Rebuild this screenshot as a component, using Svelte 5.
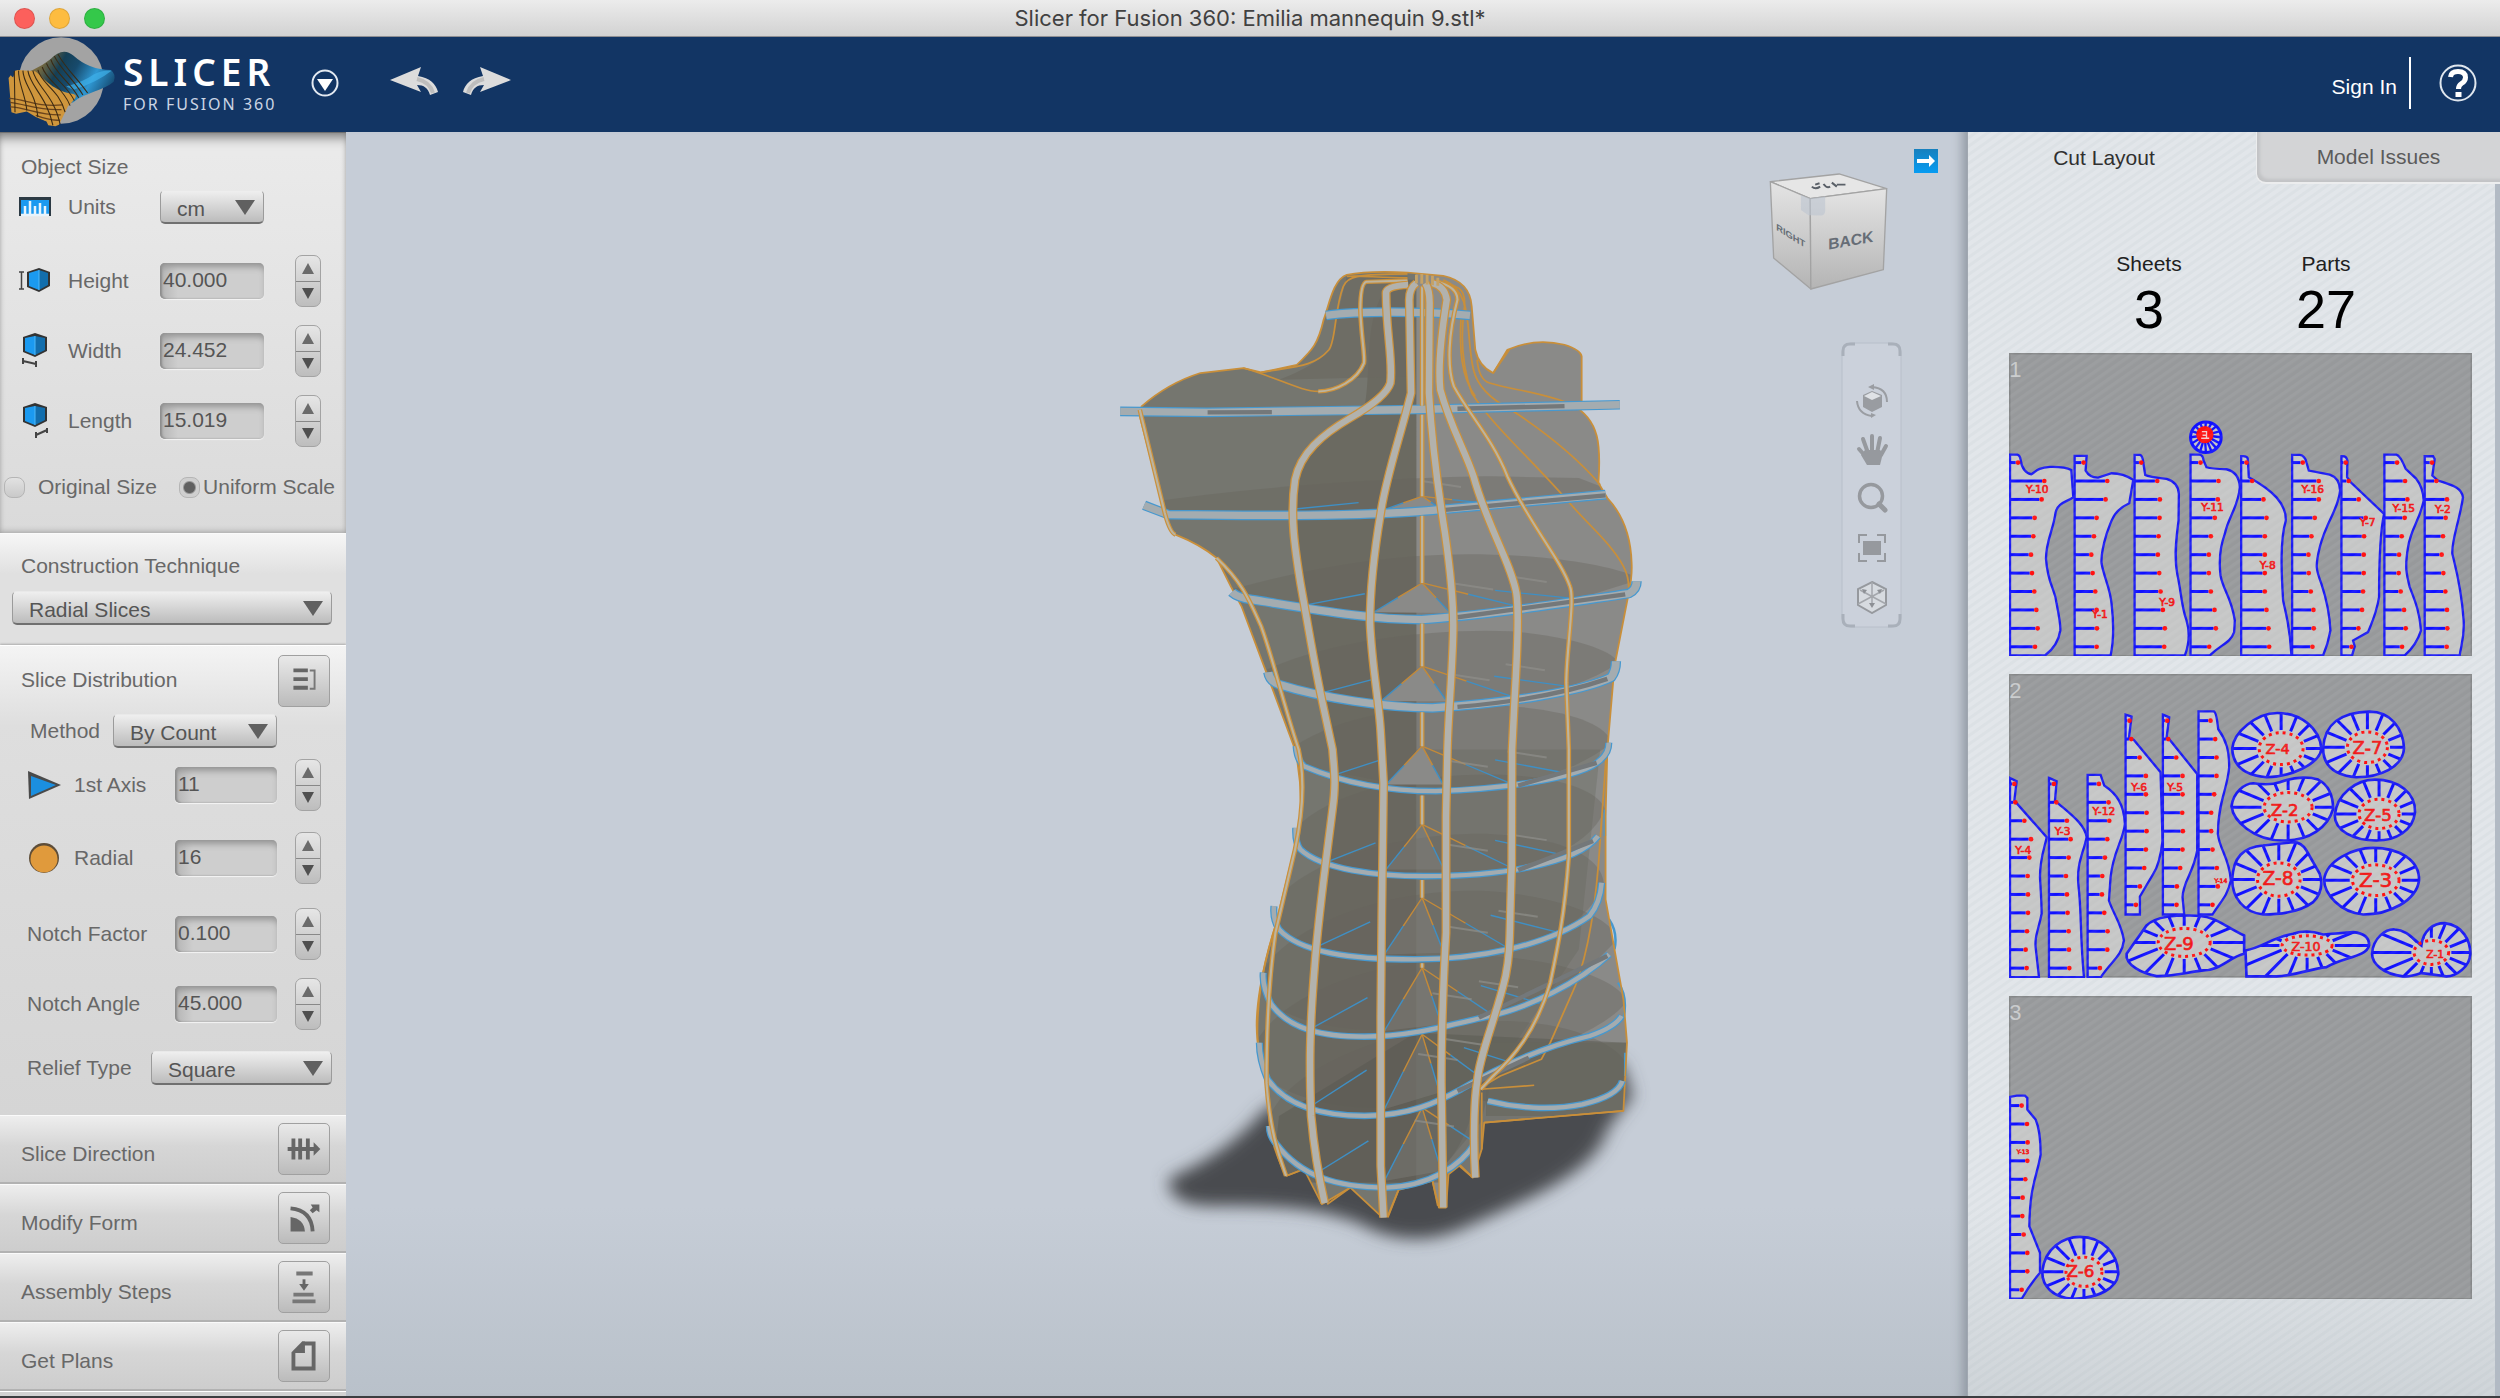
<script lang="ts">
  type Field = { id: string; label: string; value: string; step: number; digits: number; icon?: string };
  type Rib = { x: number; ends: number[]; d: string; label: string; lx: number; ly: number; size?: number };
  type Disc = { cx: number; cy: number; rx: number; ry: number; d: string; label: string; lx: number; ly: number; size: number };
  type Sheet = { top: number; ribs: Rib[]; discs: Disc[] };

  let units = $state('cm');
  let technique = $state('Radial Slices');
  let method = $state('By Count');
  let relief = $state('Square');
  let scale = $state('uniform');
  let tab = $state('layout');

  let sizes: Field[] = $state([
    { id: 'height', label: 'Height', value: '40.000', step: 1, digits: 3 },
    { id: 'width', label: 'Width', value: '24.452', step: 1, digits: 3 },
    { id: 'length', label: 'Length', value: '15.019', step: 1, digits: 3 }
  ]);

  let slices: Field[] = $state([
    { id: 'axis', label: '1st Axis', value: '11', step: 1, digits: 0, icon: 'axis' },
    { id: 'radial', label: 'Radial', value: '16', step: 1, digits: 0, icon: 'radial' },
    { id: 'factor', label: 'Notch Factor', value: '0.100', step: 0.1, digits: 3 },
    { id: 'angle', label: 'Notch Angle', value: '45.000', step: 1, digits: 3 }
  ]);

  const closed = ['Slice Direction', 'Modify Form', 'Assembly Steps', 'Get Plans'];
  const tools = ['Orbit', 'Pan', 'Zoom', 'Fit', 'Home'];

  function bump(f: Field, dir: number) {
    f.value = (parseFloat(f.value) + dir * f.step).toFixed(f.digits);
  }

  // front edges of the horizontal slices
  const bands = [
    'M632,197 C720,184 900,184 1035,197',
    'M55,485 L300,488 L850,480 L1455,465',
    'M122,767 L190,795 C500,800 800,797 950,780 L1415,735',
    'M368,1028 Q385,1045 425,1050 C600,1080 750,1110 900,1110 C1100,1095 1300,1060 1480,1032 Q1502,1020 1502,995',
    'M470,1268 Q474,1295 500,1305 C620,1345 800,1375 930,1375 C1150,1360 1350,1325 1430,1284 Q1444,1265 1444,1235',
    'M548,1490 Q550,1530 570,1550 C680,1600 800,1625 940,1625 C1100,1620 1350,1590 1402,1530 Q1424,1510 1424,1480',
    'M547,1735 Q545,1780 560,1800 C620,1860 770,1880 910,1880 C1100,1880 1330,1850 1394,1760',
    'M486,1970 Q482,2010 500,2040 C560,2110 700,2130 880,2130 C1060,2130 1250,2090 1370,2000 Q1400,1960 1404,1900',
    'M456,2170 Q452,2210 478,2265 C530,2340 620,2362 740,2362 C860,2362 950,2335 1090,2300 C1200,2275 1340,2200 1425,2115',
    'M445,2380 Q445,2430 468,2490 C520,2570 620,2600 740,2600 C870,2598 940,2560 1010,2520 C1120,2450 1250,2390 1370,2360 Q1440,2335 1460,2300',
    'M473,2630 Q473,2660 493,2685 C560,2780 660,2815 800,2815 C920,2812 1010,2750 1050,2680',
    'M1085,2555 C1160,2575 1260,2585 1350,2565 Q1450,2540 1462,2495'
  ];

  const faces = [
    'M122,760 C500,700 900,682 1100,680 L1340,685 L1420,718 L950,785 L190,795Z',
    'M365,1020 C600,950 850,905 1100,915 C1300,920 1480,960 1510,990 L1300,1060 L900,1110 L425,1050Z',
    'M465,1260 C650,1170 950,1135 1150,1145 C1350,1165 1440,1210 1450,1240 C1300,1350 1050,1375 930,1375 L500,1305Z',
    'M543,1490 C700,1380 950,1355 1150,1370 C1330,1385 1420,1430 1432,1480 C1300,1600 1050,1625 940,1625 L570,1550Z',
    'M543,1740 C640,1630 850,1575 1100,1575 C1300,1580 1400,1630 1413,1680 C1350,1850 1050,1880 910,1880 C770,1880 620,1860 555,1800Z',
    'M485,1960 C560,1850 800,1750 1080,1753 C1300,1765 1400,1820 1410,1900 C1350,2090 1060,2130 880,2130 C700,2130 560,2110 495,2040Z',
    'M455,2160 C560,2000 850,1915 1080,1925 C1300,1940 1440,2010 1447,2070 C1340,2200 1200,2275 1090,2300 C860,2362 620,2362 475,2265Z',
    'M440,2370 C540,2200 850,2120 1080,2120 C1300,2130 1470,2200 1472,2260 C1400,2360 1120,2450 1010,2520 C870,2598 620,2600 465,2490Z',
    'M470,2620 C500,2470 800,2330 1100,2315 C1330,2310 1470,2400 1472,2450 L1462,2495 C1400,2600 1160,2575 1050,2550 C1010,2750 920,2812 800,2815 C660,2815 560,2780 490,2685Z'
  ];

  // spokes of each slice: hub height, then the points where the ribs meet the edge
  const spokes = [
    { y: 740, to: [[545, 778], [795, 780], [950, 775], [1070, 760]] },
    { y: 1000, to: [[580, 1065], [765, 1088], [980, 1090], [1160, 1068], [1310, 1045]] },
    { y: 1250, to: [[620, 1330], [785, 1355], [970, 1355], [1150, 1340], [1305, 1310]] },
    { y: 1490, to: [[660, 1575], [800, 1605], [960, 1605], [1145, 1600], [1310, 1572]] },
    { y: 1725, to: [[640, 1835], [800, 1860], [962, 1860], [1145, 1852], [1310, 1820]] },
    { y: 1945, to: [[610, 2090], [795, 2115], [962, 2110], [1145, 2098], [1285, 2050]] },
    { y: 2155, to: [[595, 2335], [795, 2345], [955, 2325], [1100, 2298], [1230, 2262]] },
    { y: 2355, to: [[590, 2570], [795, 2580], [950, 2530], [1060, 2480], [1135, 2435]] },
    { y: 2575, to: [[600, 2775], [795, 2795], [955, 2765], [1050, 2680]] }
  ];

  const ribs = [
    'M862,105 Q800,108 800,130 C800,250 820,330 812,400 C800,440 740,480 700,505 C620,555 560,610 545,690 C530,800 545,900 560,1000 C580,1120 600,1250 620,1350 L650,1500 C655,1570 660,1600 650,1680 C630,1850 610,2000 600,2150 C585,2350 585,2450 590,2600 C600,2720 615,2800 628,2862',
    'M885,100 Q865,115 865,150 L870,430 C840,560 800,680 785,790 C760,950 755,1050 755,1120 C760,1250 780,1350 785,1450 L793,1600 L788,2000 L785,2300 L785,2750 L793,2905',
    'M910,100 Q922,120 922,160 L920,430 C930,600 950,750 965,850 C985,1000 990,1080 988,1150 C985,1280 975,1380 972,1500 L968,1700 L968,2050 C955,2300 955,2400 955,2500 L960,2875',
    'M930,100 Q965,110 970,150 C955,250 945,350 952,420 C980,530 1020,600 1045,680 C1080,820 1150,940 1165,1030 C1175,1100 1165,1250 1160,1350 L1153,1500 L1152,1850 C1145,2050 1150,2100 1135,2180 C1110,2300 1060,2420 1055,2500 C1045,2560 1045,2700 1050,2785'
  ];

  const thinRibs = [
    'M860,92 L745,96 Q728,100 728,180 C730,260 742,320 738,340 C720,390 660,425 610,425',
    'M940,95 Q1000,110 1000,150 C975,250 970,350 990,410 C1030,490 1100,570 1140,680 C1200,820 1290,930 1315,1010 C1330,1050 1305,1200 1305,1300 L1312,1500 L1312,1820 C1300,2000 1280,2100 1260,2200 C1220,2350 1150,2430 1100,2480 L1065,2520',
    'M110,480 L180,790 Q195,850 210,855',
    'M325,925 C400,1000 420,1060 450,1130 C490,1250 500,1320 555,1500 C575,1600 565,1700 545,1800 L490,2050 C470,2200 465,2350 465,2500 C475,2650 500,2720 520,2780',
    'M901,110V468M901,495V740M901,798V1000M901,1122V1250M901,1388V1490M901,1638V1725M901,1892V1945M901,2142V2155'
  ];

  const edges = [
    'M860,72 C720,72 690,80 680,110 C655,180 660,270 640,300 C600,350 550,350 450,368',
    'M610,425 C560,425 500,385 400,355',
    'M860,84 C780,84 720,76 690,80',
    'M950,95 C1020,110 1020,130 1020,170 C1005,280 1020,370 1040,430 C1100,530 1200,620 1310,755 C1370,830 1430,880 1465,950 Q1485,990 1478,1040',
    'M1418,1500 L1400,1770 C1390,1950 1370,2100 1330,2210 L1260,2380 L1235,2430 L1120,2480 L1065,2515',
    'M960,90 C1050,130 1020,250 1045,360 Q1060,430 1150,480 C1250,550 1340,630 1400,705',
    'M1010,200 C1005,300 1010,380 1050,440',
    'M1055,330 Q1060,390 1090,400 C1150,420 1250,430 1320,465',
    'M1100,370 L1145,300',
    'M520,2780 L555,2765 M635,2865 L700,2815 M805,2905 L835,2822 M945,2870 L930,2795 M1043,2785 L1005,2745 M1068,2700 V2530',
    'M1065,2520 L1215,2508 M1075,2620 L1465,2585',
    'M440,2380 C436,2250 455,2150 490,2030'
  ];

  const outline =
    'M690,75 C650,90 640,170 625,210 C610,280 595,300 550,345 L450,368 L400,355 L280,370 Q190,400 115,470 L110,500 L180,790 Q190,845 210,855 Q280,885 325,925 L365,1010 L395,1070 L465,1270 L545,1500 Q565,1600 560,1700 L545,1790 L490,2030 C450,2160 430,2300 440,2370 L468,2530 L475,2650 Q495,2730 520,2780 L570,2760 L620,2865 L700,2815 L785,2900 H805 L835,2822 L930,2795 L948,2875 H968 L975,2775 L1005,2750 L1043,2785 L1068,2700 L1075,2620 L1465,2585 L1475,2380 L1465,2250 L1440,2100 L1415,1950 V1700 L1420,1500 L1440,1250 L1480,1030 Q1490,980 1488,940 Q1485,820 1420,745 L1395,700 C1402,590 1400,510 1320,465 H1348 V320 Q1345,300 1300,285 C1250,272 1200,272 1140,300 L1100,370 Q1060,350 1050,300 L1040,170 Q1035,95 960,78 L860,68 Q750,62 690,75Z';

  const sheets: Sheet[] = [
    {
      top: 37,
      ribs: [
        { x: 60, ends: [84, 163, 155, 134, 130, 123, 126, 133, 139, 143, 135], label: 'Y-10', lx: 108, ly: 457, d: 'M60,342 H82 Q90,344 92,358 C95,385 110,400 124,401 C140,392 140,382 180,379 Q225,378 244,388 L250,470 C230,485 205,485 197,515 C190,570 168,600 168,655 C175,740 195,740 200,790 C210,840 212,860 211,870 C205,910 185,930 165,945 H60Z' },
        { x: 254, ends: [281, 352, 347, 320, 312, 304, 308, 316, 320, 321, 320], label: 'Y-1', lx: 306, ly: 834, d: 'M254,346 H290 L287,390 Q300,412 325,411 L365,398 Q400,398 430,418 L418,488 C370,510 365,540 350,580 C335,630 333,650 335,670 C345,720 360,740 365,790 C373,860 372,900 362,945 H254Z' },
        { x: 434, ends: [454, 502, 510, 509, 506, 504, 508, 512, 519, 525, 523], label: 'Y-9', lx: 508, ly: 798, d: 'M434,343 H450 Q458,345 460,365 L466,403 Q475,408 530,415 Q565,425 567,460 L566,540 C558,600 553,650 562,700 C575,760 575,800 590,840 C602,880 598,910 585,945 H434Z' },
        { x: 602, ends: [632, 686, 684, 675, 663, 657, 657, 663, 674, 678, 658], label: 'Y-11', lx: 634, ly: 512, d: 'M602,342 H630 Q640,345 641,360 L650,380 Q665,385 710,386 Q748,395 750,440 C745,500 715,530 705,580 C690,620 688,670 692,705 C700,750 725,770 735,840 L733,875 C720,910 695,910 660,945 H602Z' },
        { x: 754, ends: [770, 787, 821, 830, 825, 825, 825, 825, 830, 836, 838], label: 'Y-8', lx: 810, ly: 685, d: 'M754,347 Q772,345 774,355 L777,410 C850,450 890,490 888,540 C870,600 875,700 880,780 C890,830 900,850 905,945 H754Z' },
        { x: 907, ends: [939, 987, 987, 975, 965, 956, 957, 963, 971, 972, 968], label: 'Y-16', lx: 935, ly: 457, d: 'M907,343 H930 Q945,345 950,365 L957,390 L1020,402 Q1050,412 1051,450 C1045,510 1010,540 990,620 C975,680 980,690 995,730 C1015,790 1020,830 1022,870 Q1015,910 1000,945 H907Z' },
        { x: 1055, ends: [1068, 1077, 1107, 1128, 1123, 1122, 1122, 1120, 1117, 1106, 1085], label: 'Y-7', lx: 1110, ly: 555, d: 'M1055,347 Q1070,345 1073,360 L1072,410 L1083,425 L1183,520 C1172,570 1168,650 1168,770 C1160,820 1145,850 1135,875 L1090,900 L1095,918 L1087,945 H1055Z' },
        { x: 1184, ends: [1222, 1246, 1253, 1245, 1236, 1228, 1227, 1233, 1243, 1248, 1237], label: 'Y-15', lx: 1208, ly: 513, d: 'M1184,342 H1220 Q1232,345 1248,385 L1280,415 Q1300,440 1302,480 C1290,540 1265,560 1255,620 C1245,680 1250,700 1260,740 C1280,790 1290,820 1294,870 Q1280,915 1245,945 H1184Z' },
        { x: 1305, ends: [1327, 1340, 1372, 1368, 1360, 1356, 1361, 1367, 1372, 1373, 1371], label: 'Y-2', lx: 1336, ly: 517, d: 'M1305,347 H1330 L1335,355 L1328,405 L1345,420 C1390,435 1415,440 1420,470 C1410,540 1385,600 1388,640 C1400,690 1415,740 1422,840 C1425,890 1415,910 1410,945 H1305Z' }
      ],
      discs: []
    },
    {
      top: 40,
      ribs: [
        { x: 60, ends: [73, 76, 103, 123, 118, 113, 114, 114, 111, 107, 110], label: 'Y-4', lx: 76, ly: 579, d: 'M60,352 L80,362 L73,420 L170,530 C165,560 150,590 150,650 C153,700 155,730 155,760 C145,810 132,830 138,870 L147,950 H60Z' },
        { x: 177, ends: [192, 199, 231, 242, 236, 228, 231, 233, 236, 237, 238], label: 'Y-3', lx: 194, ly: 523, d: 'M177,352 L200,362 L195,420 C240,460 285,490 290,530 C280,580 258,610 266,680 C275,760 270,820 282,950 H177Z' },
        { x: 293, ends: [327, 356, 358, 352, 345, 337, 336, 343, 353, 352, 330], label: 'Y-12', lx: 308, ly: 463, d: 'M293,343 H332 L343,375 C380,400 402,430 405,490 C400,540 370,570 362,650 L357,720 C370,760 395,790 402,840 C395,890 365,900 333,950 H293Z' },
        { x: 407, ends: [419, 424, 449, 468, 468, 470, 470, 468, 463, 450, 438], label: 'Y-6', lx: 424, ly: 390, d: 'M407,162 L425,168 L417,232 L432,238 L512,335 L518,540 Q510,610 490,640 L450,708 V762 H407Z' },
        { x: 519, ends: [532, 535, 559, 578, 578, 577, 579, 578, 571, 561, 560], label: 'Y-5', lx: 532, ly: 390, d: 'M519,162 L538,170 L530,232 L540,238 L622,340 V570 C610,640 580,660 578,710 L583,762 H519Z' },
        { x: 626, ends: [662, 676, 680, 680, 673, 664, 664, 668, 681, 684, 668], label: 'Y-14', lx: 674, ly: 667, size: 18, d: 'M626,152 H672 Q680,155 685,205 C710,240 718,270 718,320 C712,390 685,420 684,520 C690,570 718,590 723,660 C712,710 690,725 668,762 H626Z' }
      ],
      discs: [
        { cx: 874, cy: 264, rx: 66, ry: 48, label: 'Z-4', lx: 827, ly: 280, size: 44, d: 'M727,265 C730,215 800,157 862,157 C930,157 990,200 995,265 C990,310 900,350 830,350 C770,345 730,320 727,265Z' },
        { cx: 1133, cy: 260, rx: 60, ry: 46, label: 'Z-7', lx: 1088, ly: 281, size: 54, d: 'M1000,262 C1005,190 1050,155 1140,153 C1200,153 1240,200 1243,262 C1240,320 1170,350 1100,350 C1040,345 1000,320 1000,262Z' },
        { cx: 895, cy: 440, rx: 72, ry: 44, label: 'Z-2', lx: 843, ly: 466, size: 50, d: 'M725,437 C730,395 765,368 790,368 Q840,375 870,365 C920,345 965,350 985,357 C1020,375 1030,410 1030,445 C1015,500 960,540 880,540 C790,540 730,480 725,437Z' },
        { cx: 1168, cy: 460, rx: 60, ry: 44, label: 'Z-5', lx: 1123, ly: 482, size: 50, d: 'M1035,465 C1040,400 1100,357 1155,357 C1230,357 1278,400 1276,455 C1270,510 1220,540 1160,540 C1090,540 1035,510 1035,465Z' },
        { cx: 867, cy: 657, rx: 64, ry: 50, label: 'Z-8', lx: 818, ly: 672, size: 56, d: 'M727,657 C730,590 760,560 820,555 L910,545 Q935,545 950,570 L990,640 Q1005,690 970,725 C930,755 870,762 820,762 C760,755 727,710 727,657Z' },
        { cx: 1158, cy: 659, rx: 70, ry: 46, label: 'Z-3', lx: 1108, ly: 680, size: 60, d: 'M1003,657 C1010,600 1090,562 1150,562 C1230,562 1290,600 1288,660 C1280,720 1200,762 1120,762 C1050,755 1003,700 1003,657Z' },
        { cx: 583, cy: 846, rx: 78, ry: 42, label: 'Z-9', lx: 522, ly: 870, size: 54, d: 'M410,880 L470,795 C500,765 560,765 600,765 C680,765 690,790 763,825 V880 C720,890 690,930 640,930 C590,935 560,948 500,947 C460,940 405,915 410,880Z' },
        { cx: 952, cy: 855, rx: 75, ry: 29, label: 'Z-10', lx: 905, ly: 871, size: 38, d: 'M767,870 C820,860 850,830 910,820 Q950,805 1000,822 L1090,815 Q1140,820 1138,855 C1130,890 1060,890 1010,920 C960,925 920,945 860,948 H770Z' },
        { cx: 1325, cy: 876, rx: 52, ry: 36, label: 'Z-1', lx: 1310, ly: 893, size: 32, d: 'M1147,880 C1150,830 1190,805 1215,807 C1250,808 1270,835 1295,855 C1300,810 1330,788 1365,788 C1420,795 1442,840 1442,880 C1440,920 1400,948 1370,948 Q1320,940 1295,938 Q1260,950 1240,948 C1180,940 1147,910 1147,880Z' }
      ]
    },
    {
      top: 44,
      ribs: [
        { x: 60, ends: [95, 111, 113, 112, 106, 98, 97, 101, 112, 112, 95], label: 'Y-13', lx: 80, ly: 519, size: 18, d: 'M60,347 L80,343 H105 L112,350 V385 L137,415 Q152,450 152,520 C140,590 120,610 118,735 L150,815 V875 Q120,910 95,953 H60Z' }
      ],
      discs: [
        { cx: 282, cy: 872, rx: 54, ry: 44, label: 'Z-6', lx: 230, ly: 888, size: 50, d: 'M157,870 C165,800 220,767 270,767 C340,767 385,820 385,880 C380,920 330,950 250,953 C190,950 155,915 157,870Z' }
      ]
    }
  ];

  const rays = Array.from({ length: 16 }, (_, i) => (i * Math.PI) / 8);

  // first notch sits 24 below the top of the rib, the rest follow evenly
  function notchY(rib: Rib, sheet: number, i: number) {
    const start = sheet === 1 ? (rib.x > 400 ? 180 : 370) : sheet === 0 ? 366 : 373;
    return start + i * 55.3;
  }
</script>

{#snippet stepper(f: Field)}
  <div class="stepper">
    <button type="button" aria-label="Increase {f.label}" onclick={() => bump(f, 1)}>
      <svg viewBox="0 0 12 11"><path d="M6 0 12 11H0Z" fill="#6b6b6b" /></svg>
    </button>
    <button type="button" aria-label="Decrease {f.label}" onclick={() => bump(f, -1)}>
      <svg viewBox="0 0 12 11"><path d="M0 0H12L6 11Z" fill="#505050" /></svg>
    </button>
  </div>
{/snippet}

{#snippet arrow()}
  <svg class="arrow" viewBox="0 0 20 15"><path d="M0 0H20L10 15Z" fill="#606060" /></svg>
{/snippet}

{#snippet cube(kind: string)}
  <svg class="icon" viewBox="0 0 33 36">
    {#if kind === 'height'}
      <path d="M8 9 20 5 31 9V23L20 29 8 24Z" fill="#333" />
      <path d="M10 10 20 7V27L10 23Z" fill="#1b9af0" />
      <path d="M20 7 29 10V22L20 27Z" fill="#126ead" />
      <path d="M20 7V27" stroke="#4fb8f8" />
      <path d="M0 9H5M0 26H5M2.500 9V26" stroke="#444" stroke-width="1.500" />
    {:else}
      <path d="M4 4 16 0 28 4V18L16 24 4 19Z" fill="#333" />
      <path d="M6 5 16 3V22L6 18Z" fill="#1b9af0" />
      <path d="M16 3 26 5V17L16 22Z" fill="#126ead" />
      <path d="M16 3V22" stroke="#4fb8f8" />
      {#if kind === 'width'}
        <path d="M4 25V31M17 28V34M4 28 17 31" stroke="#444" stroke-width="2" />
      {:else}
        <path d="M17 29V35M28 25V30M17 32 28 27" stroke="#444" stroke-width="2" />
      {/if}
    {/if}
  </svg>
{/snippet}

<div class="window">
  <header class="titlebar">
    <div class="lights">
      <button type="button" class="light red" aria-label="Close"></button>
      <button type="button" class="light yellow" aria-label="Minimise"></button>
      <button type="button" class="light green" aria-label="Full screen"></button>
    </div>
    <h1>Slicer for Fusion 360: Emilia mannequin 9.stl*</h1>
  </header>

  <nav class="appbar">
    <svg class="logo" viewBox="0 112 330 276" preserveAspectRatio="none">
      <defs>
        <linearGradient id="wave" x1="0" x2="1" y1="0.200" y2="0.500">
          <stop offset="0" stop-color="#c08f3c" />
          <stop offset="0.300" stop-color="#6b6440" />
          <stop offset="0.450" stop-color="#153f55" />
          <stop offset="0.600" stop-color="#174a6c" />
          <stop offset="0.800" stop-color="#2f97d2" />
          <stop offset="1" stop-color="#175078" />
        </linearGradient>
      </defs>
      <ellipse cx="171" cy="244" rx="119" ry="131" fill="#a3a3a3" />
      <path d="M30 235 Q100 215 140 180 Q175 140 205 168 Q250 212 310 212 Q326 225 318 248 C290 275 240 280 205 310 L165 325 60 320Z" fill="url(#wave)" />
      <path d="M185 262 Q230 250 262 226 Q285 212 312 214 Q270 250 205 272Z" fill="#3fb0ea" opacity=".7" />
      <path d="M24 236 L30 228 37 236 42 214 50 212 98 216 C115 225 140 275 205 285 C220 290 210 300 190 322 L165 378 155 383 135 380 130 368 100 355 75 338 45 345 32 340Z" fill="#cf963c" />
      <path d="M26 298C70 300 100 325 175 318M28 310C75 316 110 336 172 332M28 324C75 326 110 350 170 348M100 350C120 358 150 366 168 364" fill="none" stroke="#6a431b" stroke-width="4" />
      <path d="M40 215 42 340M52 214C50 250 72 290 75 335M64 214C66 260 100 280 106 355M78 214C84 262 130 290 148 380M92 215C100 260 150 285 168 376M106 212C115 255 165 270 182 340M118 203C130 245 175 262 196 320M130 192C145 235 185 255 208 305M142 180C155 225 195 245 220 296M152 170C170 210 205 240 232 288M162 164C185 210 215 235 245 282" fill="none" stroke="#3a2a14" stroke-width="3" />
    </svg>
    <div class="brand">
      <strong>SLICER</strong>
      <span>FOR FUSION 360</span>
    </div>
    <button type="button" class="menu-btn" aria-label="Menu">
      <svg viewBox="0 0 28 28"><circle cx="14" cy="14" r="12.500" fill="none" stroke="#e4eaf2" stroke-width="2" /><path d="M6 10H22L14 22Z" fill="#fff" /></svg>
    </button>
    <button type="button" class="undo" aria-label="Undo">
      <svg viewBox="0 0 48 28"><path d="M0 13 31 0 28 9C40 11 46 17 48 25L40 28C38 21 34 18 27 18L31 25Z" fill="#dcdcdc" /><path d="M27 12Q40 15 43 26" fill="none" stroke="#bdbdbd" stroke-width="4" /></svg>
    </button>
    <button type="button" class="redo" aria-label="Redo">
      <svg viewBox="0 0 48 28"><path d="M48 13 17 0 20 9C8 11 2 17 0 25L8 28C10 21 14 18 21 18L17 25Z" fill="#dcdcdc" /><path d="M21 12Q8 15 5 26" fill="none" stroke="#bdbdbd" stroke-width="4" /></svg>
    </button>
    <div class="account">
      <a href="#signin">Sign In</a>
      <button type="button" class="help" aria-label="Help">
        <svg viewBox="0 0 38 38"><circle cx="19" cy="19" r="17.500" fill="none" stroke="#dfe6ee" stroke-width="2" /><path d="M11.500 13Q12 7.500 19 7.500Q26.500 7.500 26.500 13.500Q26.500 17 22.500 19.500Q19.500 21.500 19.500 25" fill="none" stroke="#fff" stroke-width="5" /><rect x="16.500" y="28" width="6" height="5" fill="#fff" /></svg>
      </button>
    </div>
  </nav>

  <main>
    <aside>
      <section class="size">
        <h2>Object Size</h2>
        <div class="row units">
          <svg class="icon ruler" viewBox="0 0 32 20"><rect width="32" height="19" fill="#2c3a44" /><rect x="2" y="3" width="28" height="15" fill="#1b9af0" /><path d="M6 18V9M11 18V4M16 18V9M21 18V6M26 18V9M2 18H30" stroke="#e8f4fc" stroke-width="2.500" /></svg>
          <label for="units">Units</label>
          <div class="select">
            <select id="units" bind:value={units}><option>cm</option><option>in</option><option>mm</option></select>
            {@render arrow()}
          </div>
        </div>
        {#each sizes as f}
          <div class="row">
            {@render cube(f.id)}
            <label for={f.id}>{f.label}</label>
            <input type="text" id={f.id} bind:value={f.value} />
            {@render stepper(f)}
          </div>
        {/each}
        <div class="radios">
          <label><input type="radio" value="original" bind:group={scale} />Original Size</label>
          <label><input type="radio" value="uniform" bind:group={scale} />Uniform Scale</label>
        </div>
      </section>

      <section class="technique">
        <h2><label for="technique">Construction Technique</label></h2>
        <div class="select">
          <select id="technique" bind:value={technique}><option>Radial Slices</option><option>Stacked Slices</option></select>
          {@render arrow()}
        </div>
      </section>

      <section class="distribution">
        <div class="head">
          <h2>Slice Distribution</h2>
          <button type="button" class="tile" aria-label="Slice Distribution">
            <svg viewBox="0 0 52 52"><path d="M15 15H30M15 24H30M15 33H30" stroke="#666" stroke-width="4" /><path d="M32 15H37V34H32" fill="none" stroke="#777" stroke-width="2" /></svg>
          </button>
        </div>
        <div class="method">
          <label for="method">Method</label>
          <div class="select">
            <select id="method" bind:value={method}><option>By Count</option><option>By Distance</option></select>
            {@render arrow()}
          </div>
        </div>
        {#each slices as f}
          <div class="row" class:plain={!f.icon}>
            {#if f.icon === 'axis'}
              <svg class="icon" viewBox="0 0 33 28"><path d="M0 0 33 14 1 28Z" fill="#4a4a4a" /><path d="M3 5 28 14 3 25Z" fill="#1b8fe0" /></svg>
            {:else if f.icon === 'radial'}
              <svg class="icon" viewBox="0 0 33 30"><circle cx="16" cy="15" r="15" fill="#5e4d38" /><circle cx="16" cy="16" r="13.500" fill="#e09a3c" /></svg>
            {/if}
            <label for={f.id}>{f.label}</label>
            <input type="text" id={f.id} bind:value={f.value} />
            {@render stepper(f)}
          </div>
        {/each}
        <div class="relief">
          <label for="relief">Relief Type</label>
          <div class="select">
            <select id="relief" bind:value={relief}><option>Square</option><option>Dogbone</option></select>
            {@render arrow()}
          </div>
        </div>
      </section>

      {#each closed as name, i}
        <section class="closed">
          <h2>{name}</h2>
          <button type="button" class="tile" aria-label={name}>
            <svg viewBox="0 0 52 52">
              {#if i === 0}
                <path d="M9 26H38M15 15V37M22 15V37M30 15V37" stroke="#666" stroke-width="4" /><path d="M36 19 43 26 36 33Z" fill="#666" />
              {:else if i === 1}
                <path d="M12 25Q26 27 27 40H12Z" fill="#666" /><path d="M12 16Q34 18 35 40" fill="none" stroke="#666" stroke-width="4" /><path d="M33 12H42V20L39 18 35 21 32 18 35 15Z" fill="#666" />
              {:else if i === 2}
                <path d="M18 12H35M15 34H36M14 41H38" stroke="#777" stroke-width="4" /><path d="M26 18V25" stroke="#666" stroke-width="3" /><path d="M21 23H31L26 30Z" fill="#666" />
              {:else}
                <path d="M15 23V39H36V13H24" fill="none" stroke="#666" stroke-width="4" /><path d="M13 22 24 11H27V23H13Z" fill="#666" />
              {/if}
            </svg>
          </button>
        </section>
      {/each}
      <div class="tail"></div>
    </aside>

    <div class="viewport">
      <svg class="model" viewBox="345 133 1622 1263" role="img" aria-label="Emilia mannequin">
        <defs>
          <filter id="soft" x="-20%" y="-20%" width="140%" height="140%"><feGaussianBlur stdDeviation="24" /></filter>
          <clipPath id="body"><path d={outline} /></clipPath>
        </defs>
        <g transform="translate(1100 250) scale(.35714 .33333)" fill="none" stroke-linejoin="round">
          <path d="M460 2580 Q360 2710 195 2785 Q180 2865 300 2870 C500 2870 600 2875 720 2920 C800 2970 900 2990 1010 2940 C1200 2850 1390 2770 1420 2640 L1490 2540 1460 2440 900 2350Z" fill="#484b4f" filter="url(#soft)" />
          <g clip-path="url(#body)">
            <path d={outline} fill="#8a8a88" />
            <path d="M0 0H883V3000H0Z" fill="#75766f" />
            <path d="M862 90 805 110 C735 200 760 360 740 470 L700 505 C580 580 545 640 540 760 L560 1000 650 1500 640 1720 600 2150 V2800H885V90Z" fill="#6b6a61" />
            <path d="M883 1500H1400L1340 2100 1100 2480 1065 2620 885 2850Z" fill="#75766f" opacity=".6" />
            <path d="M500 390 Q600 350 640 300 L690 80 H860V380Z" fill="#6b6a61" opacity=".7" />
            {#each faces as d}
              <path {d} fill="#66655b" opacity=".38" />
            {/each}
            <path d="M883 2350 L1475 2380V2600L1075 2620 1060 2800H480L500 2600Z" fill="#55554e" opacity=".4" />
            <path d="M1080 2380H1475V2600H1080Z" fill="#66655c" opacity=".6" />
          </g>
          {#each spokes as s}
            <path d="M901 {s.y} L{s.to[1].join(' ')} L{s.to[2].join(' ')}Z" fill="#8a8a88" opacity={s.y > 1600 ? 0.3 : 1} />
            {#each s.to as p, i}
              {@const mx = (901 + p[0]) / 2}
              {@const my = (s.y + p[1]) / 2}
              <path d="M901 {s.y} L{mx} {my}" stroke="#c48a38" stroke-width="4" opacity={i === 0 || i === 4 ? 0 : 1} />
              <path d="M{mx} {my} L{p[0]} {p[1]}" stroke="#3f8fc4" stroke-width="4" />
              {#if i > 2}
                <path d="M{p[0] - 60} {p[1] - 48} l-110 -18" stroke="#8e8f8a" stroke-width="6" opacity=".7" />
              {/if}
            {/each}
          {/each}
          <path d="M1425 2010 Q1450 2050 1440 2100 M1450 2200 Q1478 2240 1465 2310 M1470 2410V2480 M1413 1680V1760" stroke="#4698cf" stroke-width="7" />
          {#each edges as d}
            <path {d} stroke="#c98f3a" stroke-width="5" />
          {/each}
          <path d={outline} stroke="#c98f3a" stroke-width="5" />
          {#each bands as d, i}
            <path {d} stroke="#4698cf" stroke-width={i < 5 ? 29 : 20} />
            <path {d} stroke="#a4acb0" stroke-width={i < 5 ? 22 : 13} />
          {/each}
          <path d="M300 488 480 487M1000 477 1300 469M950 782 1415 737M1000 1103 1470 1034M1000 1372Q1250 1350 1420 1288M1170 1608 1390 1540M1170 1862 1380 1775M1060 2305 1420 2120M1000 2525 1200 2425" stroke="#74787a" stroke-width="13" />
          {#each thinRibs as d}
            <path {d} stroke="#cb913c" stroke-width="13" />
            <path {d} stroke="#bcb49f" stroke-width="6" />
          {/each}
          {#each ribs as d}
            <path {d} stroke="#cb913c" stroke-width="25" />
            <path {d} stroke="#b2b2ad" stroke-width="18" />
          {/each}
          <path d="M885 75V100M900 72V102M915 75V104M930 78V106M945 84V108" stroke="#c5a266" stroke-width="8" />
        </g>
      </svg>

      <button type="button" class="collapse" aria-label="Hide panel">
        <svg viewBox="0 0 24 24"><path d="M3 12H16" stroke="#fff" stroke-width="4" /><path d="M15 6 21 12 15 18Z" fill="#fff" /></svg>
      </button>

      <button type="button" class="viewcube" aria-label="View cube">
        <svg viewBox="80 120 370 370">
          <defs>
            <linearGradient id="side" x1="0" x2="0" y1="0" y2="1"><stop offset="0" stop-color="#e4e4e4" /><stop offset="1" stop-color="#b4b4b4" /></linearGradient>
          </defs>
          <g stroke="#a3a3a3" stroke-width="4" stroke-linejoin="round">
            <path d="M90 155 297 132 440 176 210 206Z" fill="#e6e6e6" />
            <path d="M90 155 210 206 212 478 100 385Z" fill="url(#side)" />
            <path d="M210 206 440 176 430 420 212 478Z" fill="url(#side)" />
          </g>
          <path d="M182 195 210 206 255 200V245Q253 256 245 257L205 256 182 240Z" fill="#bcc4d0" opacity=".6" />
          <path d="M215 170Q225 180 240 170M238 160 225 164M250 162Q260 176 270 170M275 158 290 170M290 164H316" fill="none" stroke="#5a6068" stroke-width="6" />
          <text class="face" transform="translate(264 360) skewY(-10)" font-size="47">BACK</text>
          <text class="face" transform="translate(108 300) skewY(32)" font-size="28">RIGHT</text>
        </svg>
      </button>

      <div class="toolbar">
        <svg class="brackets" viewBox="0 0 61 286"><rect x="1" y="1" width="59" height="284" rx="10" fill="#d0d6df" fill-opacity=".5" stroke="#b8bfca" /><path d="M2 14V9Q2 2 9 2H14M47 2H52Q59 2 59 9V14M59 272V277Q59 284 52 284H47M14 284H9Q2 284 2 277V272" fill="none" stroke="#a9b0ba" stroke-width="3" /></svg>
        {#each tools as name, i}
          <button type="button" aria-label={name}>
            <svg viewBox="0 0 34 34">
              {#if i === 0}
                <path d="M8 11 17 7 27 11V23L17 28 8 23Z" fill="#999ca1" /><path d="M9 12 17 8 26 12 17 16Z" fill="#dfe2e6" /><path d="M17 3Q32 4 32 18M17 32Q3 30 2 17" fill="none" stroke="#9a9da2" stroke-width="2" /><path d="M19 0V6L13 3ZM16 29V34L21 31Z" fill="#9a9da2" />
              {:else if i === 1}
                <path d="M4 16 11 24M8 6 13 20M17 3V20M25 5 22 20M31 13 26 22" stroke="#96999e" stroke-width="4" stroke-linecap="round" /><path d="M10 17H25L28 20 25 32H12L6 22Z" fill="#96999e" />
              {:else if i === 2}
                <circle cx="16" cy="14" r="11.500" fill="none" stroke="#96999e" stroke-width="3.500" /><path d="M24 22 30 28" stroke="#96999e" stroke-width="5" stroke-linecap="round" />
              {:else if i === 3}
                <rect x="8" y="10" width="18" height="14" fill="#96999e" /><path d="M4 12V4H12M22 4H30V12M30 22V30H22M12 30H4V22" fill="none" stroke="#96999e" stroke-width="2" />
              {:else}
                <path d="M17 2 31 9V25L17 33 3 25V9Z" fill="#d7dbe0" stroke="#96999e" stroke-width="2" /><path d="M17 2V26M5 10 31 24M29 10 3 24" stroke="#a4a7ac" stroke-width="1.500" /><path d="M14 23H20L17 28ZM7 9 12 10 9 14ZM27 9 22 10 25 14Z" fill="#8d9095" />
              {/if}
            </svg>
          </button>
        {/each}
      </div>
    </div>

    <div class="panel">
      <div class="tabs" role="tablist">
        <button type="button" role="tab" class="front" aria-selected={tab === 'layout'} onclick={() => (tab = 'layout')}>Cut Layout</button>
        <button type="button" role="tab" class="behind" aria-selected={tab === 'issues'} onclick={() => (tab = 'issues')}>Model Issues</button>
      </div>
      <dl>
        <div><dt>Sheets</dt><dd>3</dd></div>
        <div><dt>Parts</dt><dd>27</dd></div>
      </dl>
      <div class="sheets">
        {#each sheets as sheet, n}
          <svg viewBox="57 {sheet.top} 1390 911" role="img" aria-label="Sheet {n + 1}">
            <defs>
              <pattern id="hatch{n}" width="21" height="21" patternUnits="userSpaceOnUse" patternTransform="rotate(-35)"><rect width="21" height="10" fill="#fff" opacity=".05" /></pattern>
            </defs>
            <rect x="59" y={sheet.top + 2} width="1386" height="907" fill="#97999b" stroke="#858788" stroke-width="5" />
            <text x="58" y={sheet.top + 73} class="num">{n + 1}</text>
            {#each sheet.ribs as rib}
              <path d={rib.d} fill="#c5c6c6" stroke="#1c1cf2" stroke-width="7" />
              {#each rib.ends as end, i}
                {@const y = notchY(rib, n, i)}
                <path d="M{rib.x} {y}H{end - 7}" stroke="#1010ff" stroke-width="9" />
                <circle cx={end} cy={y} r="7" fill="#f11" />
              {/each}
              <text x={rib.lx} y={rib.ly} font-size={rib.size ?? 32} class="part">{rib.label}</text>
            {/each}
            {#each sheet.discs as disc, k}
              <clipPath id="disc{n}-{k}"><path d={disc.d} /></clipPath>
              <path d={disc.d} fill="#c5c6c6" />
              <g clip-path="url(#disc{n}-{k})">
                {#each rays as a}
                  <path d="M{disc.cx + (disc.rx + 8) * Math.cos(a)} {disc.cy + (disc.ry + 8) * Math.sin(a)} l{250 * Math.cos(a)} {250 * Math.sin(a)}" stroke="#1010ff" stroke-width="9" />
                {/each}
              </g>
              <path d={disc.d} fill="none" stroke="#1c1cf2" stroke-width="8" />
              <ellipse cx={disc.cx} cy={disc.cy} rx={disc.rx} ry={disc.ry} fill="none" stroke="#f11" stroke-width="9" stroke-dasharray="9 12" />
              <text x={disc.lx} y={disc.ly} font-size={disc.size} class="part">{disc.label}</text>
            {/each}
            {#if n === 0}
              <circle cx="648" cy="290" r="46" fill="#c5c6c6" stroke="#1010ff" stroke-width="9" />
              {#each rays as a}
                <path d="M645 284 L{648 + 44 * Math.cos(a)} {290 + 46 * Math.sin(a)}" stroke="#1010ff" stroke-width="7" />
              {/each}
              <circle cx="645" cy="282" r="26" fill="#f11" />
              <path d="M636 273H650V293M638 284H650M634 293H658" fill="none" stroke="#f4c9c9" stroke-width="4" />
            {/if}
            <rect x="57" y={sheet.top} width="1390" height="911" fill="url(#hatch{n})" />
          </svg>
        {/each}
      </div>
    </div>
  </main>
</div>

<style>
  :global(body) {
    margin: 0;
    background: #3e3f44;
  }

  .window {
    display: flex;
    flex-direction: column;
    min-height: 100vh;
    box-sizing: border-box;
    border-bottom: 2px solid #3c3d40;
    font-family: 'Liberation Sans', Arial, sans-serif;
    font-size: 21px;
    line-height: 24px;
    color: #686868;
  }

  button {
    padding: 0;
    border: none;
    background: none;
    font: inherit;
    color: inherit;
    cursor: pointer;
  }

  svg {
    display: block;
  }

  h1, h2, dl, dd {
    margin: 0;
    font: inherit;
  }

  .titlebar {
    display: grid;
    grid-template-columns: 1fr auto 1fr;
    align-items: center;
    height: 36px;
    background: linear-gradient(#ececec, #d2d2d2);
    border-bottom: 1px solid #8f8f93;
    color: #414141;
  }

  .titlebar h1 {
    font-family: Inter, sans-serif;
    font-size: 22px;
  }

  .lights {
    display: flex;
    gap: 14px;
    padding-left: 14px;
  }

  .light {
    width: 21px;
    height: 21px;
    border-radius: 50%;
    border: 1px solid rgba(0, 0, 0, 0.12);
  }

  .red { background: #fc605c; }
  .yellow { background: #fdbc40; }
  .green { background: #34c84a; }

  .appbar {
    display: flex;
    align-items: center;
    height: 95px;
    padding-bottom: 4px;
    box-sizing: border-box;
    background: #123564;
    color: #fff;
  }

  .logo {
    width: 118px;
    height: 91px;
  }

  .brand {
    display: flex;
    flex-direction: column;
    width: 194px;
    padding-left: 5px;
    font-family: 'Noto Sans', sans-serif;
    white-space: nowrap;
  }

  .brand strong {
    font-size: 37px;
    line-height: 42px;
    font-weight: 600;
    letter-spacing: 5px;
  }

  .brand span {
    font-size: 16px;
    line-height: 22px;
    letter-spacing: 2px;
    color: #ccd6e4;
  }

  .menu-btn {
    width: 28px;
    margin-left: -6px;
  }

  .undo, .redo {
    width: 48px;
    margin-bottom: 4px;
  }

  .undo { margin-left: 51px; }
  .redo { margin-left: 25px; }

  .account {
    display: flex;
    align-items: center;
    gap: 12px;
    margin-left: auto;
    padding-right: 23px;
  }

  .account a {
    padding-top: 8px;
    color: #fff;
    text-decoration: none;
  }

  .help {
    width: 38px;
    height: 52px;
    padding-left: 28px;
    border-left: 2px solid #fff;
    box-sizing: content-box;
  }

  main {
    flex: 1;
    display: grid;
    grid-template-columns: 346px minmax(0, 1fr) 533px;
  }

  aside {
    display: flex;
    flex-direction: column;
    background: #e0e0e0;
    border-top: 1px solid #707070;
  }

  section {
    border-top: 1px solid #fafafa;
    box-sizing: border-box;
  }

  .size {
    padding: 22px 25px 34px 0;
    border-top: none;
    background: linear-gradient(#eaeaea 20px, #dadada);
    box-shadow: inset 0 14px 12px -10px #777, inset 0 -6px 6px -5px #a0a0a0, inset -4px 0 5px -4px #aaa, inset 4px 0 5px -4px #aaa;
  }

  section h2 {
    padding-left: 21px;
  }

  .row {
    display: grid;
    grid-template-columns: 68px 92px 104px 1fr;
    align-items: center;
    margin-bottom: 18px;
  }

  .row .stepper {
    justify-self: end;
  }

  .row .icon {
    width: 33px;
    margin-left: 19px;
  }

  .units {
    margin: 11px 0 31px;
  }

  .row .ruler {
    width: 32px;
  }

  .select {
    position: relative;
  }

  select {
    appearance: none;
    width: 100%;
    height: 34px;
    padding: 4px 16px 0;
    border: 1px solid #9b9b9b;
    border-top-color: #e9e9e9;
    border-bottom: 2px solid #707070;
    border-radius: 5px;
    background: linear-gradient(#efefef, #bcbcbc);
    font: inherit;
    color: #555;
    display: block;
  }

  .arrow {
    position: absolute;
    top: 10px;
    right: 9px;
    width: 20px;
    pointer-events: none;
  }

  input[type='text'] {
    width: 100%;
    height: 36px;
    box-sizing: border-box;
    padding: 0 3px 3px;
    border: none;
    border-radius: 5px;
    background: linear-gradient(90deg, #b4b4b4, #cecece 18px);
    box-shadow: inset 0 6px 6px -2px #969696, inset 2px 0 2px #8c8c8c, 0 1px 1px #f4f4f4;
    font: inherit;
    color: #555;
  }

  .stepper {
    display: flex;
    flex-direction: column;
    width: 26px;
    height: 52px;
    box-sizing: border-box;
    border: 1px solid #a3a3a3;
    border-radius: 7px;
    background: linear-gradient(#e6e6e6, #bdbdbd);
  }

  .stepper button {
    flex: 1;
    display: grid;
    place-items: center;
  }

  .stepper button:first-child {
    border-bottom: 1px solid #888;
  }

  .stepper svg {
    width: 12px;
  }

  .radios {
    display: flex;
    justify-content: space-between;
    margin: 28px -14px 0 4px;
    white-space: nowrap;
  }

  .radios label {
    display: flex;
    align-items: center;
    gap: 3px;
  }

  .radios label:first-child {
    gap: 13px;
  }

  input[type='radio'] {
    appearance: none;
    width: 21px;
    height: 21px;
    margin: 0;
    border: 1px solid #b5b5b5;
    border-radius: 8px;
    background: linear-gradient(#e2e2e2, #c9c9c9);
  }

  input[type='radio']:checked {
    background: radial-gradient(circle, #606060 5px, #cfcfcf 7px);
  }

  .technique {
    padding: 20px 14px 20px 12px;
    background: linear-gradient(#f6f6f6, #e0e0e0 40px);
  }

  .technique h2 {
    padding: 0 0 13px 9px;
  }

  .distribution {
    padding: 9px 0 30px;
    border-top-color: #fff;
    box-shadow: 0 -1px 2px #aaa;
    background: linear-gradient(#f4f4f4, #dedede 80px, #d5d5d5);
  }

  .head, .closed {
    display: flex;
    align-items: center;
    justify-content: space-between;
    padding-right: 16px;
  }

  .head h2 {
    padding-bottom: 3px;
  }

  .closed h2 {
    padding-top: 9px;
  }

  .tile {
    width: 52px;
    height: 52px;
    border: 1px solid #a0a0a0;
    border-radius: 5px;
    background: linear-gradient(#e9e9e9, #bbb);
    box-sizing: border-box;
  }

  .method, .relief {
    display: grid;
    align-items: center;
    white-space: nowrap;
  }

  .method {
    grid-template-columns: 83px 164px;
    padding: 7px 0 11px 30px;
  }

  .relief {
    grid-template-columns: 124px 1fr;
    padding: 3px 14px 0 27px;
  }

  .distribution .row {
    grid-template-columns: 74px 101px 102px 1fr;
    margin-bottom: 21px;
    padding-right: 25px;
  }

  .distribution .row .icon {
    margin-left: 28px;
  }

  .distribution .row.plain {
    grid-template-columns: 175px 102px 1fr;
    margin: 24px 0 18px;
    white-space: nowrap;
  }

  .distribution .row.plain + .row.plain {
    margin-top: 18px;
  }

  .plain label {
    padding-left: 27px;
  }

  .closed {
    height: 69px;
    background: linear-gradient(#eee, #d6d6d6 30px, #cdcdcd);
    border-bottom: 2px solid #b2b2b2;
  }

  .tail {
    flex: 1;
    border-top: 1px solid #fff;
    background: #d2d2d2;
  }

  .viewport {
    position: relative;
    min-width: 0;
    background: linear-gradient(#c6cdd7 85%, #b9c1ca);
    box-shadow: inset -14px 0 12px -10px #8d959f;
  }

  .model {
    width: 100%;
    height: 100%;
  }

  .collapse {
    position: absolute;
    top: 17px;
    right: 29px;
    width: 24px;
    height: 24px;
    background: linear-gradient(#1880bd, #079cf2);
  }

  .viewcube {
    position: absolute;
    top: 38px;
    right: 77px;
    width: 123px;
  }

  .face {
    font-family: 'Liberation Sans', sans-serif;
    font-weight: 700;
    fill: #666d76;
  }

  .toolbar {
    position: absolute;
    top: 210px;
    right: 65px;
    width: 61px;
    height: 286px;
    padding-top: 34px;
    box-sizing: border-box;
    display: flex;
    flex-direction: column;
    align-items: center;
  }

  .brackets {
    position: absolute;
    inset: 0;
  }

  .toolbar button {
    position: relative;
    width: 34px;
    height: 49px;
    display: grid;
    align-items: center;
  }

  .panel {
    background:
      linear-gradient(#0000 85%, rgba(150, 160, 165, 0.25)),
      repeating-linear-gradient(145deg, #e2e6ea 0 3px, #dce1e5 4px 6px, #e2e6ea 7px);
    border-right: 5px solid #b2bac4;
    border-left: 1px solid #a0a7b0;
    box-sizing: border-box;
  }

  .tabs {
    display: grid;
    grid-template-columns: 288px 1fr;
    margin-right: -5px;
  }

  .tabs button {
    height: 52px;
    color: #303030;
  }

  .tabs .front {
    padding-right: 16px;
  }

  .tabs .behind {
    color: #5b5b5b;
    background: #d3d4d6;
    border-bottom-left-radius: 10px;
    border-bottom: 2px solid #ecedee;
    border-left: 1px solid #ecedee;
    box-shadow: inset 3px -3px 3px #c2c3c5;
  }

  dl {
    display: flex;
    gap: 92px;
    padding: 68px 0 10px 148px;
    color: #202020;
    text-align: center;
  }

  dl div {
    width: 66px;
  }

  dl div + div {
    width: 104px;
  }

  dd {
    font-size: 54px;
    line-height: 67px;
    color: #000;
  }

  .sheets {
    display: flex;
    flex-direction: column;
    gap: 18px;
    padding: 0 23px 0 41px;
  }

  .num {
    font-size: 66px;
    fill: #c9cbcc;
  }

  .part {
    font-family: 'DejaVu Sans', sans-serif;
    fill: #f01818;
    stroke: #f01818;
    stroke-width: 2px;
  }
</style>
